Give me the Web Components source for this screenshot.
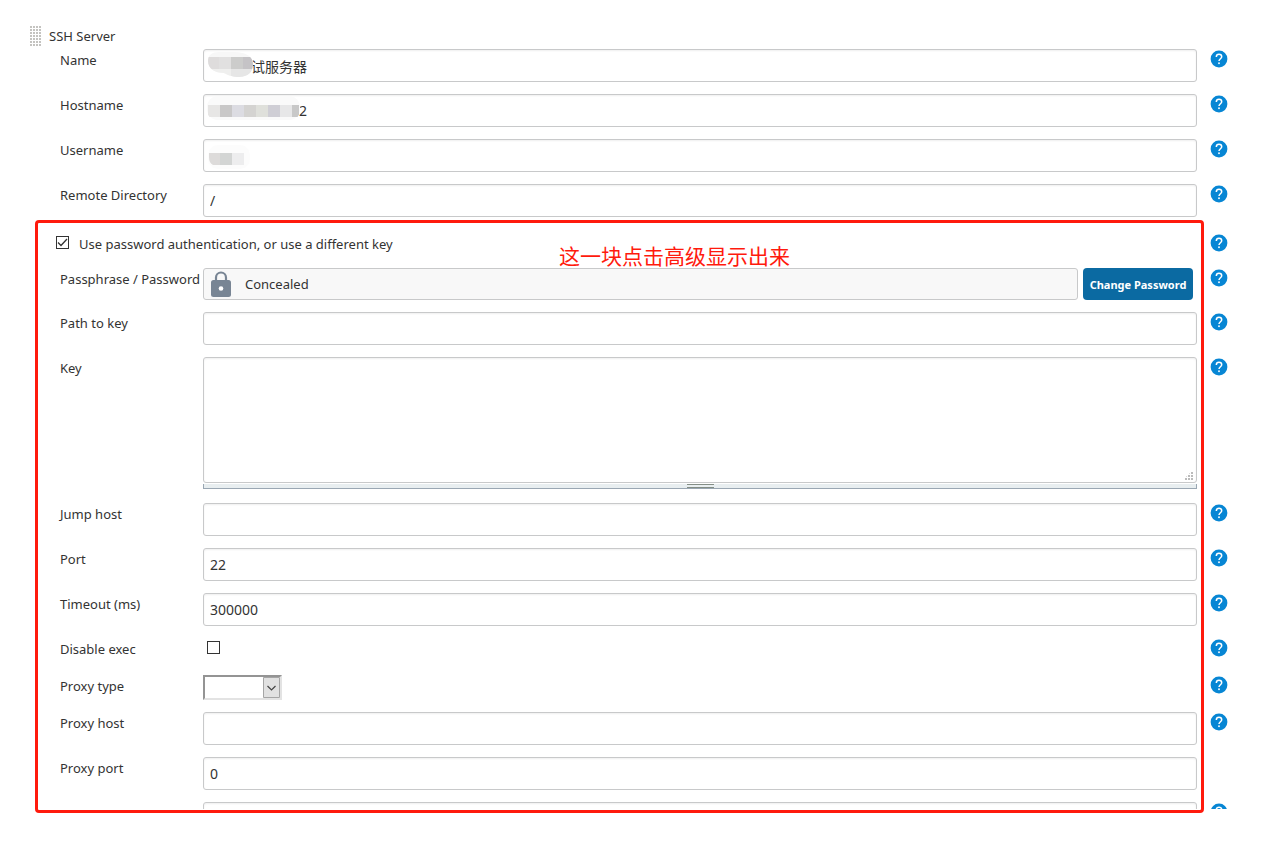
<!DOCTYPE html>
<html lang="en">
<head>
<meta charset="utf-8">
<title>SSH Server</title>
<style>
body { margin: 0; background: #fff; color: #333; font: 13px/20px "Noto Sans", "Noto Sans CJK SC", sans-serif; }
</style>
</head>
<body>
<ssh-server-form></ssh-server-form>

<script>
class HelpButton extends HTMLElement {
  constructor() {
    super();
    this.attachShadow({ mode: 'open' }).innerHTML = `
      <style>
        :host { display: block; width: 18px; height: 18px; }
        button { display: block; border: 0; padding: 0; background: none; cursor: pointer; }
        svg { display: block; }
      </style>
      <button type="button" aria-label="Help">
        <svg width="18" height="18" viewBox="0 0 18 18">
          <circle cx="9" cy="9" r="8.4" fill="#0786d4"/>
          <path d="M6.3 6.9C6.3 5.2 7.4 4.2 9 4.2s2.7 1 2.7 2.5C11.7 8.6 9 8.9 9 11.1" fill="none" stroke="#fff" stroke-width="1.5"/>
          <rect x="8.2" y="12.4" width="1.6" height="1.7" fill="#fff"/>
        </svg>
      </button>`;
  }
}
customElements.define('help-button', HelpButton);

/* A pixelated cover over private characters of a field. */
class PixelMask extends HTMLElement {
  constructor() {
    super();
    const shapes = {
      name: `<clipPath id="c"><path d="M1 11C1 5 5 2 12 2h15c13 0 19 5 19 12 0 8-5 13-14 13-7 0-11-2-15-4C8 23 1 19 1 11z"/></clipPath>
        <g clip-path="url(#c)"><path fill="#f7f7f7" d="M0 0h48v30H0z"/><path fill="#dedcdc" d="M0 7h12v12H0z"/><path fill="#e1e0e0" d="M12 7h12v12H12z"/><path fill="#cccccb" d="M24 7h12v12H24z"/><path fill="#c5c3c6" d="M36 7h12v12H36z"/><path fill="#efefee" d="M0 19h24v10H0z"/><path fill="#e6e6e6" d="M24 19h24v10H24z"/></g>`,
      host: `<rect x="0" y="1" width="93" height="24" rx="11" fill="#fafafa"/>
        <clipPath id="c"><rect x="0" y="1" width="93" height="24" rx="9"/></clipPath>
        <g clip-path="url(#c)"><path fill="#e7e6e5" d="M1 10h12v12H1z"/><path fill="#c9c8c8" d="M13 10h12v12H13z"/><path fill="#dcdce2" d="M25 10h12v12H25z"/><path fill="#d4d3d1" d="M37 10h12v12H37z"/><path fill="#dfe0db" d="M49 10h12v12H49z"/><path fill="#cfced5" d="M61 10h12v12H61z"/><path fill="#e7e7e8" d="M73 10h12v12H73z"/><path fill="#c8c8c8" d="M85 10h7v12h-7z"/></g>`,
      user: `<rect x="1" y="5" width="42" height="24" rx="10" fill="#fcfcfc"/>
        <path fill="#dddbda" d="M2 13h11v12H6q-4-2-4-8z"/><path fill="#d3d5d4" d="M13 13h12v12H13z"/><path fill="#ededee" d="M25 13h12v12H25z"/>`
    };
    this.attachShadow({ mode: 'open' }).innerHTML = `
      <style>
        :host { display: block; position: absolute; left: 4px; top: 1px; pointer-events: none; }
        svg { display: block; }
      </style>
      <svg width="94" height="30" viewBox="0 0 94 30" aria-hidden="true">${shapes[this.getAttribute('shape')]}</svg>`;
  }
}
customElements.define('pixel-mask', PixelMask);

/* One settings line: label, control and, unless "nohelp" is set, a help button. */
class SettingRow extends HTMLElement {
  constructor() {
    super();
    const type = this.getAttribute('type') || 'text';
    const label = this.getAttribute('label');
    const value = this.getAttribute('value') || '';
    const tick = on => `<input id="f" class="tick" type="checkbox"${on ? ' checked' : ''}>`;
    const controls = {
      text: `<input id="f" class="box" type="text" value="${value}">`,
      textarea: `<textarea id="f" class="box"></textarea><div class="grip"></div>`,
      check: tick(false),
      select: `<select id="f"><option></option><option>http</option><option>socks4</option><option>socks5</option></select>
        <svg class="arrow" width="17" height="21" viewBox="0 0 17 21" aria-hidden="true"><path d="M.5.5h16v20H.5z" fill="#e1e1e1" stroke="#a5a5a5"/><path d="M4.500 9l4 4 4-4" fill="none" stroke="#444" stroke-width="1.2"/></svg>`,
      secret: `<div class="secret"><output id="f" class="concealed">
          <svg width="20" height="26" viewBox="0 0 20 26" aria-hidden="true"><path d="M5 10V6.500a5 5 0 0 1 10 0V10" fill="none" stroke="#788594" stroke-width="2.200"/><rect x="0" y="9" width="20" height="17" rx="2.500" fill="#788594"/><circle cx="10" cy="17.500" r="2.300" fill="#fff"/></svg><span>Concealed</span></output>
        <button type="button">Change Password</button></div>`
    };
    const body = type === 'toggle'
      ? `<label class="toggle">${tick(true)}<span>${label}</span></label>`
      : `<label for="f">${label}</label><div class="control">${controls[type]}<slot></slot></div>`;
    this.attachShadow({ mode: 'open' }).innerHTML = `
      <style>
        :host { display: grid; grid-template-columns: 143px minmax(0, 1fr) 18px; padding-left: 60px; white-space: nowrap; --lead: 6px; }
        * { box-sizing: border-box; }
        label { padding-top: 1px; }
        help-button { grid-column: 3; padding-top: 1px; }
        .control { position: relative; margin-right: 13px; }
        input, textarea, select, button { font: inherit; color: inherit; margin: 0; }
        .box { display: block; width: 100%; height: 33px; padding: 0 6px 0 var(--lead); border: 1px solid #c8c9ca; border-radius: 3px; background: #fff; box-shadow: inset 0 1px 2px #0001; outline: 0; font-size: 14px; }
        textarea.box { height: 126px; resize: none; }
        .tick { appearance: none; display: block; width: 13px; height: 13px; border: 1px solid #333; background: #fff; flex: none; }
        .tick:checked { background: url('data:image/svg+xml,<svg xmlns="http://www.w3.org/2000/svg" viewBox="0 0 11 11"><path d="M1 5.500l3 3L10 2" fill="none" stroke="%23333" stroke-width="1.300"/></svg>'); }
        .control > .tick { margin: 3px 4px 9px; }
        .toggle { grid-column: 1 / 3; display: flex; gap: 10px; height: 23px; margin-left: -4px; }
        .toggle .tick { margin-top: 2px; }
        .grip { height: 5px; margin: 1px 0 2px; border: solid #9aa7b3; border-width: 0 1px 1px; background: linear-gradient(#848e86 0 1px, #e8eef0 1px 3px, #848e86 3px) center / 27px 4px no-repeat #e8eef0; }
        .grip::before { content: ""; position: absolute; right: 4px; top: 115px; width: 8px; height: 8px; background: repeating-linear-gradient(90deg, #bbb 0 2px, #fff 2px 3px); -webkit-mask: repeating-linear-gradient(#000 0 2px, #0000 2px 3px); clip-path: polygon(100% 0, 100% 100%, 0 100%, 0 75%, 75% 0); }
        select { appearance: none; display: block; width: 79px; height: 25px; padding: 0 20px 0 4px; border: 2px solid; border-color: #949494 #e3e3e3 #e3e3e3 #949494; border-radius: 0; background: #fff; }
        .arrow { position: absolute; left: 60px; top: 2px; pointer-events: none; }
        .secret { display: flex; gap: 5px; margin-right: 4px; }
        .concealed { flex: 1; display: flex; align-items: center; gap: 14px; height: 32px; padding-left: 7px; border: 1px solid #c8c9ca; border-radius: 3px; background: #f8f8f8; }
        button { width: 110px; height: 32px; padding: 2px 0 0; border: 0; border-radius: 4px; background: #0b6aa2; color: #fff; font-size: 11px; font-weight: 700; }
      </style>
      ${body}${this.hasAttribute('nohelp') ? '' : '<help-button></help-button>'}`;
  }
}
customElements.define('setting-row', SettingRow);

/* Red frame and note drawn over the advanced settings. */
class RedNote extends HTMLElement {
  constructor() {
    super();
    this.attachShadow({ mode: 'open' }).innerHTML = `
      <style>
        :host { display: block; box-sizing: border-box; position: absolute; inset: -9px 24px -4px 35px; border: 3px solid #ff1a0d; border-radius: 4px; pointer-events: none; }
        p { margin: 18px 0 0; padding-left: 110px; text-align: center; font: 21px/28px "Noto Sans CJK SC", sans-serif; color: #ff1a0d; white-space: nowrap; }
      </style>
      <p lang="zh"><slot></slot></p>`;
  }
}
customElements.define('red-note', RedNote);

class SshServerForm extends HTMLElement {
  constructor() {
    super();
    this.attachShadow({ mode: 'open' }).innerHTML = `
      <style>
        :host { display: block; padding: 26px 47px 29px 0; }
        h1 { display: flex; align-items: center; gap: 8px; margin: 0 0 3px 30px; font: inherit; }
        .drag { width: 11px; height: 20px; background: repeating-linear-gradient(#0000 0 2px, #fff 2px 3px), repeating-linear-gradient(90deg, #c4c3c0 0 2px, #fff 2px 3px); }
        .rows { display: grid; gap: 12px; }
        .advanced { position: relative; margin-top: 12px; }
        .clip { max-height: 580px; overflow: hidden; }
        .first { margin-top: 4px; }
      </style>
      <form>
        <h1><span class="drag"></span>SSH Server</h1>
        <div class="rows">
          <setting-row label="Name" value="试服务器" style="--lead:47px"><pixel-mask shape="name"></pixel-mask></setting-row>
          <setting-row label="Hostname" value="2" style="--lead:95px"><pixel-mask shape="host"></pixel-mask></setting-row>
          <setting-row label="Username"><pixel-mask shape="user"></pixel-mask></setting-row>
          <setting-row label="Remote Directory" value="/"></setting-row>
        </div>
        <div class="advanced">
          <div class="rows clip">
            <setting-row class="first" type="toggle" label="Use password authentication, or use a different key"></setting-row>
            <setting-row type="secret" label="Passphrase / Password"></setting-row>
            <setting-row label="Path to key"></setting-row>
            <setting-row type="textarea" label="Key"></setting-row>
            <setting-row label="Jump host"></setting-row>
            <setting-row label="Port" value="22"></setting-row>
            <setting-row label="Timeout (ms)" value="300000"></setting-row>
            <setting-row type="check" label="Disable exec"></setting-row>
            <setting-row type="select" label="Proxy type"></setting-row>
            <setting-row label="Proxy host"></setting-row>
            <setting-row label="Proxy port" value="0" nohelp></setting-row>
            <setting-row label="Proxy user"></setting-row>
          </div>
          <red-note>这一块点击高级显示出来</red-note>
        </div>
      </form>`;
  }
}
customElements.define('ssh-server-form', SshServerForm);
</script>
</body>
</html>
